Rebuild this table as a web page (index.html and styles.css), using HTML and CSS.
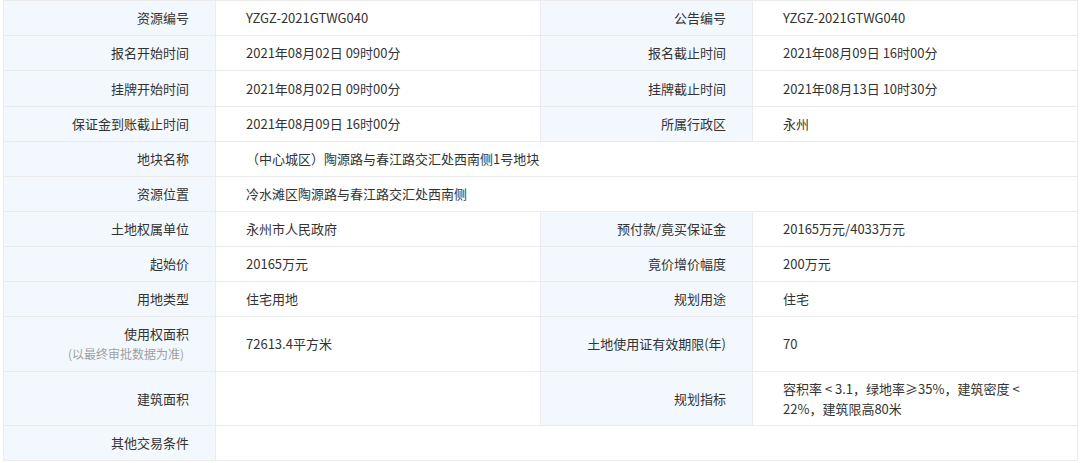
FILE: index.html
```html
<!DOCTYPE html>
<html lang="zh-CN">
<head>
<meta charset="utf-8">
<title>资源信息</title>
<link rel="stylesheet" href="styles.css">
</head>
<body>
<table class="info">
  <colgroup>
    <col class="c-label">
    <col class="c-value">
    <col class="c-label">
    <col class="c-value">
  </colgroup>
  <tbody>
    <tr>
      <th>资源编号</th><td>YZGZ-2021GTWG040</td>
      <th>公告编号</th><td>YZGZ-2021GTWG040</td>
    </tr>
    <tr>
      <th>报名开始时间</th><td>2021年08月02日 09时00分</td>
      <th>报名截止时间</th><td>2021年08月09日 16时00分</td>
    </tr>
    <tr class="plus">
      <th>挂牌开始时间</th><td>2021年08月02日 09时00分</td>
      <th>挂牌截止时间</th><td>2021年08月13日 10时30分</td>
    </tr>
    <tr>
      <th>保证金到账截止时间</th><td>2021年08月09日 16时00分</td>
      <th>所属行政区</th><td>永州</td>
    </tr>
    <tr>
      <th>地块名称</th><td colspan="3">（中心城区）陶源路与春江路交汇处西南侧1号地块</td>
    </tr>
    <tr>
      <th>资源位置</th><td colspan="3">冷水滩区陶源路与春江路交汇处西南侧</td>
    </tr>
    <tr>
      <th>土地权属单位</th><td>永州市人民政府</td>
      <th>预付款/竟买保证金</th><td>20165万元/4033万元</td>
    </tr>
    <tr>
      <th>起始价</th><td>20165万元</td>
      <th>竟价增价幅度</th><td>200万元</td>
    </tr>
    <tr>
      <th>用地类型</th><td>住宅用地</td>
      <th>规划用途</th><td>住宅</td>
    </tr>
    <tr class="tall">
      <th>使用权面积<span class="note">(以最终审批数据为准)</span></th><td>72613.4平方米</td>
      <th>土地使用证有效期限(年)</th><td>70</td>
    </tr>
    <tr class="tall2">
      <th>建筑面积</th><td></td>
      <th>规划指标</th><td class="wrap">容积率 &lt; 3.1，绿地率≥35%，建筑密度 &lt; 22%，建筑限高80米</td>
    </tr>
    <tr>
      <th>其他交易条件</th><td colspan="3"></td>
    </tr>
  </tbody>
</table>
</body>
</html>
```

FILE: styles.css
```css
html, body {
  margin: 0;
  padding: 0;
  background: #ffffff;
}

body {
  font-family: "Noto Sans CJK SC", "Noto Sans", sans-serif;
  font-size: 13px;
  color: #333333;
}

.info {
  margin-left: 3px;
  width: 1074px;
  border-collapse: collapse;
  table-layout: fixed;
}

.c-label {
  width: 212px;
}

.c-value {
  width: 325px;
}

.info th,
.info td {
  border: 1px solid #ebebeb;
  height: 34px;
  padding: 0;
  line-height: 20px;
  vertical-align: middle;
}

.info th {
  background: #f2f8fd;
  font-weight: normal;
  text-align: right;
  padding-right: 26px;
  color: #333333;
}

.info td {
  text-align: left;
  padding-left: 30px;
  padding-right: 40px;
}

.plus th,
.plus td {
  height: 35px;
}

.tall th,
.tall td {
  height: 54px;
}

.tall2 th,
.tall2 td {
  height: 53px;
}

.note {
  display: block;
  font-size: 12px;
  color: #a0a0a0;
  line-height: 20px;
  padding-right: 5px;
}
```
